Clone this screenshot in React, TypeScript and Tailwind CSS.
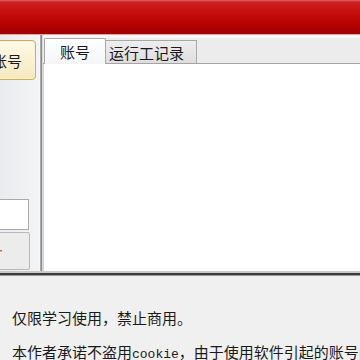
import React from "react";

export default function App() {
  return (
    <div className="w-[360px] h-[360px] overflow-hidden bg-[#f0f0f0] flex flex-col text-[#1a1a1a] font-['Noto_Sans_CJK_SC','Noto_Sans',sans-serif]">
      {/* Red title bar */}
      <div className="h-[35px] shrink-0 border-b border-[#e6a2a2] bg-[linear-gradient(to_bottom,#d86868_0px,#cf2020_2px,#c40c0c_14px,#b60202_24px,#9e0000_34px)]" />

      {/* Main area */}
      <div className="flex h-[236px] shrink-0">
        {/* Left panel */}
        <div className="w-[40px] shrink-0 overflow-hidden flex flex-col bg-[linear-gradient(to_right,#e9ebee,#f3f4f6)] border-r border-[#f8f8f8]">
          <div className="h-[5px] shrink-0" />
          <div className="h-[40px] w-[56px] -ml-[20px] shrink-0 rounded-[4px] border border-[#cfae5a] bg-[linear-gradient(to_bottom,#fffaea,#f6e8bd)] shadow-[inset_0_0_0_1px_#fbf0d0] flex items-center justify-end pr-[13px] text-[15px] leading-none">
            账号
          </div>
          <div className="flex-1" />
          <div className="h-[31px] w-[31px] -ml-[2px] shrink-0 bg-white border border-[#a9a9a9]" />
          <div className="h-[2px] shrink-0" />
          <div className="h-[38px] w-[32px] -ml-[2px] shrink-0 rounded-[2px] bg-[#ececec] border border-[#b8b8b8] flex items-center justify-end pr-[26px] text-[12px] text-[#444] overflow-hidden">
            <span className="whitespace-nowrap">登录…</span>
          </div>
          <div className="h-[1px] shrink-0" />
        </div>

        {/* Splitter */}
        <div className="w-[3px] shrink-0 flex">
          <div className="w-[1px] bg-[#a8a8a8]" />
          <div className="w-[1px] bg-[#8c8c8c]" />
          <div className="w-[1px] bg-[#d8d8d8]" />
        </div>

        {/* Right panel */}
        <div className="flex-1 flex flex-col min-w-0">
          <div className="h-[3px] shrink-0 bg-[#f6f6f6]" />
          {/* tab strip */}
          <div className="h-[26px] shrink-0 flex items-end bg-[#ececec] border-b border-[#a4a4a4] relative">
            <div className="ml-[1px] w-[62px] h-[26px] -mb-[1px] flex items-center justify-center text-[15px] leading-none bg-[linear-gradient(to_bottom,#ffffff,#f4f6f8)] border border-b-0 border-[#a8a8a8] rounded-t-[2px] relative z-10">
              账号
            </div>
            <div className="w-[91px] h-[23px] flex items-center pl-[3px] text-[15px] leading-none bg-[linear-gradient(to_bottom,#eeeeee,#dedede)] border border-b-0 border-l-0 border-[#a8a8a8]">
              运行工记录
            </div>
          </div>
          {/* content */}
          <div className="flex-1 bg-white border-l border-[#d4d4d4]" />
        </div>
      </div>

      {/* Bottom separator */}
      <div className="h-[5px] shrink-0 flex flex-col">
        <div className="h-[2px] bg-[#c8c8c8]" />
        <div className="h-[2px] bg-[#3c3c3c]" />
        <div className="h-[1px] bg-[#9a9a9a]" />
      </div>

      {/* Bottom text */}
      <div className="pt-[25px] pl-[12px] text-[15px] leading-[34px] whitespace-nowrap">
        <div>仅限学习使用，禁止商用。</div>
        <div>
          本作者承诺不盗用<span className="font-['Liberation_Mono',monospace] text-[13px]">cookie</span>，由于使用软件引起的账号问题
        </div>
      </div>
    </div>
  );
}
